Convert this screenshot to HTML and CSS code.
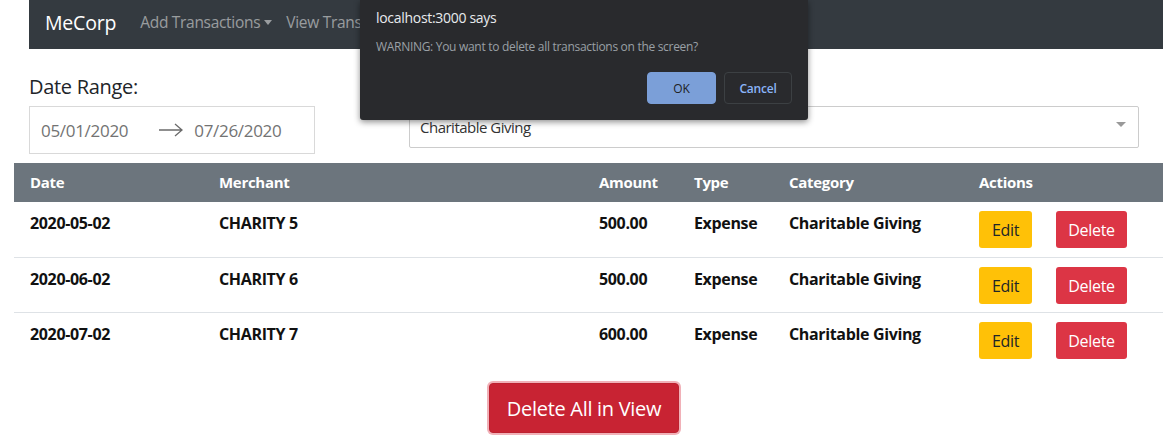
FILE: index.html
```html
<!DOCTYPE html>
<html>
<head>
<meta charset="utf-8">
<link rel="stylesheet" href="styles.css">
</head>
<body>
<nav class="navbar">
  <span class="brand">MeCorp</span>
  <span class="nav-link">Add Transactions<span class="caret"></span></span>
  <span class="nav-link">View Transactions</span>
</nav>

<div class="filters">
  <div class="date-group">
    <h5 class="label">Date Range:</h5>
    <div class="date-box">
      <span class="date-val">05/01/2020</span>
      <svg class="arrow" width="24" height="14" viewBox="0 0 24 14"><path d="M0 7H23M16 1L23 7L16 13" fill="none" stroke="#6b6b6b" stroke-width="1.3"/></svg>
      <span class="date-val">07/26/2020</span>
    </div>
  </div>
  <div class="select-group">
    <div class="select">
      <span>Charitable Giving</span>
      <span class="sel-arrow"></span>
    </div>
  </div>
</div>

<table class="tx">
  <thead>
    <tr>
      <th class="c-date">Date</th>
      <th class="c-merch">Merchant</th>
      <th class="c-amt">Amount</th>
      <th class="c-type">Type</th>
      <th class="c-cat">Category</th>
      <th class="c-act">Actions</th>
    </tr>
  </thead>
  <tbody>
    <tr>
      <td>2020-05-02</td><td>CHARITY 5</td><td>500.00</td><td>Expense</td><td>Charitable Giving</td>
      <td class="act"><button class="btn edit">Edit</button><button class="btn del">Delete</button></td>
    </tr>
    <tr>
      <td>2020-06-02</td><td>CHARITY 6</td><td>500.00</td><td>Expense</td><td>Charitable Giving</td>
      <td class="act"><button class="btn edit">Edit</button><button class="btn del">Delete</button></td>
    </tr>
    <tr>
      <td>2020-07-02</td><td>CHARITY 7</td><td>600.00</td><td>Expense</td><td>Charitable Giving</td>
      <td class="act"><button class="btn edit">Edit</button><button class="btn del">Delete</button></td>
    </tr>
  </tbody>
</table>

<div class="bottom">
  <button class="btn-all">Delete All in View</button>
</div>

<div class="dialog">
  <div class="d-title">localhost:3000 says</div>
  <div class="d-msg">WARNING: You want to delete all transactions on the screen?</div>
  <div class="d-btns">
    <button class="d-ok">OK</button>
    <button class="d-cancel">Cancel</button>
  </div>
</div>
</body>
</html>
```

FILE: styles.css
```css
* { box-sizing: border-box; }
html, body { margin: 0; padding: 0; background: #fff; }
body {
  font-family: "Open Sans", "Noto Sans", sans-serif;
  color: #212529;
  width: 1163px;
  height: 440px;
  overflow: hidden;
  position: relative;
}
.navbar {
  margin-left: 29px;
  height: 49px;
  background: #343a40;
  display: flex;
  align-items: center;
  padding-left: 16px;
  padding-bottom: 5px;
  white-space: nowrap;
  overflow: hidden;
}
.brand {
  color: #fff;
  font-size: 19.5px;
  margin-right: 24px;
  letter-spacing: -0.2px;
}
.nav-link {
  color: rgba(255,255,255,0.5);
  font-size: 15.5px;
  margin-right: 14px;
  letter-spacing: -0.3px;
  display: inline-flex;
  align-items: center;
}
.caret {
  display: inline-block;
  margin-left: 4px;
  width: 0; height: 0;
  border-left: 4.5px solid transparent;
  border-right: 4.5px solid transparent;
  border-top: 5px solid rgba(255,255,255,0.5);
}
.filters {
  display: flex;
  padding: 0 24px 0 29px;
  margin-top: 26px;
  gap: 94px;
}
.label {
  margin: 0 0 7px;
  font-size: 20px;
  font-weight: 500;
  line-height: 24px;
  letter-spacing: -0.3px;
}
.date-box {
  width: 286px;
  height: 48px;
  border: 1px solid #d9d9d9;
  display: flex;
  align-items: center;
  padding-left: 11px;
  color: #737373;
  font-size: 17px;
  letter-spacing: -0.3px;
}
.arrow { margin: 0 11px 0 31px; }
.select-group { flex: 1; padding-top: 31px; }
.select {
  height: 42px;
  border: 1px solid #ccc;
  border-radius: 2px;
  display: flex;
  align-items: center;
  justify-content: space-between;
  padding: 0 12px 0 10px;
  font-size: 15px;
  color: #333;
  letter-spacing: -0.5px;
}
.sel-arrow {
  width: 0; height: 0;
  border-left: 5px solid transparent;
  border-right: 5px solid transparent;
  border-top: 5px solid #999;
  margin-top: -6px;
}
.tx {
  margin-left: 14px;
  margin-top: 9px;
  width: 1149px;
  border-collapse: collapse;
  table-layout: fixed;
  font-size: 16px;
  font-weight: 700;
  letter-spacing: -0.35px;
}
.tx th {
  background: #6c757d;
  color: #fff;
  text-align: left;
  height: 39px;
  padding: 0 16px 2px;
  line-height: 20px;
  font-size: 15px;
  letter-spacing: -0.3px;
}
.c-date { width: 189px; }
.c-merch { width: 380px; }
.c-amt { width: 95px; }
.c-type { width: 95px; }
.c-cat { width: 190px; }
.tx td {
  vertical-align: top;
  padding: 11px 16px 0;
  line-height: 20px;
  height: 55px;
  border-top: 1px solid #dee2e6;
  color: #111;
}
.tx tbody tr:first-child td { border-top: none; }
.tx td.act { padding: 9px 16px; display: flex; gap: 24px; }
.btn {
  font-family: inherit;
  font-size: 16px;
  font-weight: 400;
  height: 37px;
  border: none;
  border-radius: 3px;
  padding: 0;
  letter-spacing: -0.3px;
}
.edit { background: #ffc107; color: #212529; width: 53px; }
.del { background: #dc3545; color: #fff; width: 71px; }
.bottom {
  display: flex;
  justify-content: center;
  padding: 16px 24px 0 29px;
}
.btn-all {
  font-family: inherit;
  font-size: 20px;
  width: 190px;
  height: 50px;
  color: #fff;
  background: #c82333;
  border: 1px solid #bd2130;
  border-radius: 4px;
  box-shadow: 0 0 0 2px rgba(225,83,97,0.45);
  letter-spacing: -0.3px;
  padding: 0;
}
.dialog {
  position: absolute;
  left: 360px;
  top: 0;
  width: 448px;
  height: 120px;
  background: #292a2d;
  box-shadow: 0 2px 6px rgba(0,0,0,0.45);
  border-radius: 0 0 3px 3px;
  padding: 9px 16px 0;
  font-family: "Open Sans", sans-serif;
}
.d-title {
  color: #e8eaed;
  font-size: 14px;
  line-height: 18px;
  letter-spacing: -0.3px;
}
.d-msg {
  color: #9aa0a6;
  font-size: 12px;
  margin-top: 11px;
  letter-spacing: -0.3px;
}
.d-btns {
  display: flex;
  justify-content: flex-end;
  gap: 8px;
  margin-top: 17px;
}
.d-ok, .d-cancel {
  font-family: inherit;
  font-size: 12px;
  height: 32px;
  border-radius: 4px;
  letter-spacing: -0.2px;
}
.d-ok {
  width: 69px;
  background: #7b9fd8;
  color: #202124;
  border: 1px solid #7b9fd8;
}
.d-cancel {
  width: 68px;
  background: #292a2d;
  color: #8ab4f8;
  border: 1px solid #3c4043;
  font-weight: 600;
}
```
